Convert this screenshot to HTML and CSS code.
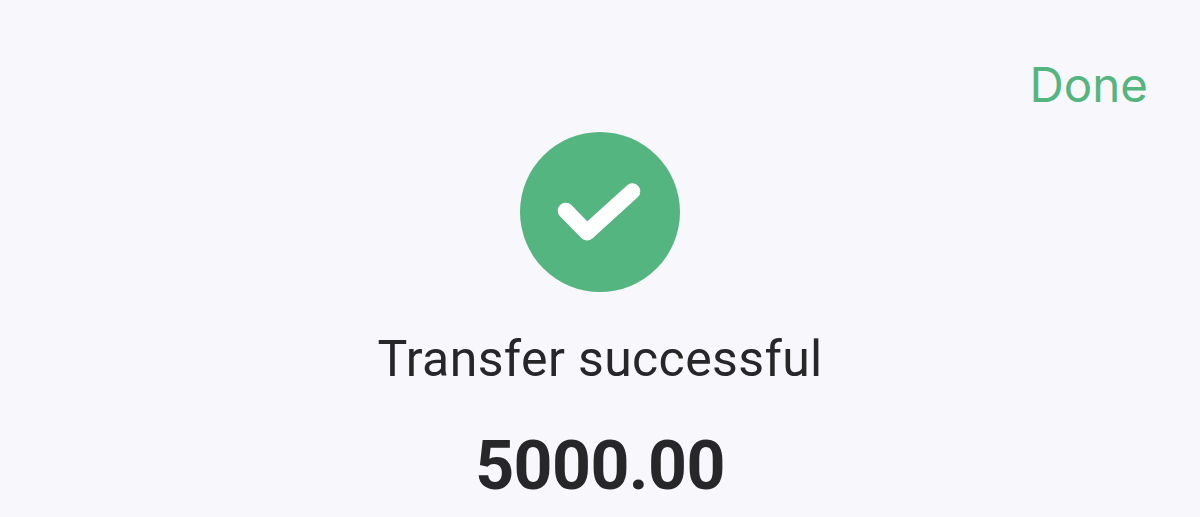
FILE: index.html
```html
<!DOCTYPE html>
<html lang="en">
<head>
    <meta charset="UTF-8">
    <title>Transfer successful</title>
    <link rel="stylesheet" href="styles.css">
</head>
<body>
    <div class="screen">
        <div class="top-bar">
            <span class="done">Done</span>
        </div>
        <div class="result">
            <svg class="check" width="160" height="160" viewBox="0 0 160 160">
                <circle cx="80" cy="80" r="80" fill="#54b580"/>
                <path d="M45.7 78.7 L67 100.5 L112.3 59.3" fill="none" stroke="#fff" stroke-width="16" stroke-linecap="round" stroke-linejoin="round"/>
            </svg>
            <div class="title">Transfer successful</div>
            <div class="amount">5000.00</div>
        </div>
    </div>
</body>
</html>
```

FILE: styles.css
```css
* {
    box-sizing: border-box;
}
html, body {
    margin: 0;
    height: 100%;
    overflow: hidden;
}
.screen {
    height: 517px;
    background: #f8f8fc;
    font-family: Roboto, "Liberation Sans", sans-serif;
    overflow: hidden;
}
.top-bar {
    display: flex;
    justify-content: flex-end;
    padding: 56px 52px 0 0;
    height: 132px;
}
.done {
    color: #54b580;
    font-family: Inter, Roboto, sans-serif;
    font-size: 47.5px;
    line-height: 58px;
}
.result {
    display: flex;
    flex-direction: column;
    align-items: center;
}
.check {
    display: block;
}
.title {
    margin-top: 37px;
    color: #272729;
    font-size: 50px;
    letter-spacing: 0.37px;
    line-height: 60px;
}
.amount {
    margin-top: 37px;
    color: #272729;
    font-size: 68px;
    font-weight: 700;
    letter-spacing: -0.6px;
    line-height: 80px;
}
```
